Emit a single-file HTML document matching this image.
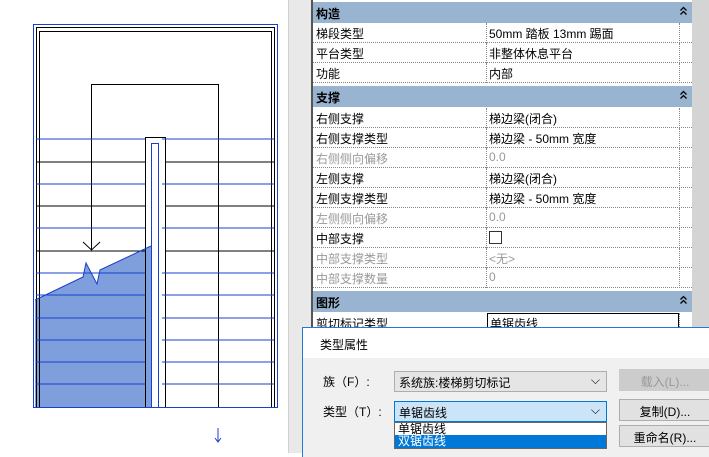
<!DOCTYPE html>
<html><head><meta charset="utf-8"><style>
*{margin:0;padding:0;box-sizing:border-box}
body{width:709px;height:453px;overflow:hidden;background:#fff;position:relative;font-family:"Liberation Sans","Noto Sans CJK SC",sans-serif;font-size:12px;color:#000}
.a{position:absolute}
.hdr{position:absolute;left:313px;width:379px;height:21px;background:#99b4d1;font-weight:bold;padding:3px 0 0 3px}
.hdr svg{position:absolute;right:5px;top:4px}
.row{position:absolute;left:313px;width:379px;height:20px;border-bottom:1px dotted #888}
.row .k{position:absolute;left:3px;top:2px}
.row .v{position:absolute;left:176px;top:2px}
.row .d1{position:absolute;left:173px;top:0;height:20px;border-left:1px dotted #888}
.row .d2{position:absolute;left:366px;top:0;height:20px;border-left:1px dotted #888}
.g{color:#999}
.btn{position:absolute;left:619px;width:92px;height:22px;border:1px solid #adadad;background:#e1e1e1;text-align:center;padding-top:3px}
</style></head><body>
<svg class="a" style="left:0;top:0" width="290" height="453">
<polygon points="35,300 83,277 86,263 97,284 100,270 151,246 151,407 35,407" fill="#7f9fdc"/>
<g fill="none" stroke="#000" stroke-width="1">
<rect x="36.5" y="27.5" width="238" height="380"/>
<rect x="39.5" y="31.5" width="232" height="376"/>
<path d="M91.5 250V84.5H218.5V407"/>
<path d="M83 242l8.5 8 8.5-8"/>
<rect x="145.5" y="137.5" width="20" height="270"/>
<path d="M36 162H145M165 162H274M36 206H145M165 206H274M36 251H145M165 251H274"/>
</g>
<g fill="none" stroke="#1a3fcf" stroke-width="1">
<rect x="33.5" y="24.5" width="244" height="383"/>
<rect x="151.5" y="143.5" width="7" height="264"/>
<path d="M36 139H145M162 139H274M36 184H145M162 184H274M36 228H145M162 228H274M36 273H145M162 273H274M36 318H145M162 318H274M36 362H145M162 362H274"/>
<path d="M35 300L83 277L86 263L97 284L100 270L151 246"/>
<path d="M218 428V442M215 438l3 4 3-4"/>
</g>
<g stroke="#1a3fcf" stroke-width="1"><path d="M36 295H145M162 295H274M36 340H145M162 340H274M36 384H145M162 384H274"/></g>
</svg>
<div class="a" style="left:288px;top:0;width:24px;height:453px;background:#e9e9e9;border-left:1px solid #d0d0d0"></div>
<div class="a" style="left:311px;top:0;width:2px;height:453px;background:#555"></div>
<div class="a" style="left:692px;top:0;width:17px;height:453px;background:#d4d4d4"></div>
<div class="a" style="left:313px;top:0;width:379px;height:2px;background:#fff"></div>

<div class="hdr" style="top:2px">构造<svg width="7" height="10"><path d="M0.5 4.5L3.5 1.5L6.5 4.5M0.5 8.5L3.5 5.5L6.5 8.5" fill="none" stroke="#000" stroke-width="1.3"/></svg></div>
<div class="row" style="top:23px"><span class="k">梯段类型</span><i class="d1"></i><span class="v">50mm 踏板 13mm 踢面</span><i class="d2"></i></div>
<div class="row" style="top:43px"><span class="k">平台类型</span><i class="d1"></i><span class="v">非整体休息平台</span><i class="d2"></i></div>
<div class="row" style="top:63px"><span class="k">功能</span><i class="d1"></i><span class="v">内部</span><i class="d2"></i></div>
<div class="hdr" style="top:86px">支撑<svg width="7" height="10"><path d="M0.5 4.5L3.5 1.5L6.5 4.5M0.5 8.5L3.5 5.5L6.5 8.5" fill="none" stroke="#000" stroke-width="1.3"/></svg></div>
<div class="row" style="top:108px"><span class="k">右侧支撑</span><i class="d1"></i><span class="v">梯边梁(闭合)</span><i class="d2"></i></div>
<div class="row" style="top:128px"><span class="k">右侧支撑类型</span><i class="d1"></i><span class="v">梯边梁 - 50mm 宽度</span><i class="d2"></i></div>
<div class="row g" style="top:148px"><span class="k">右侧侧向偏移</span><i class="d1"></i><span class="v">0.0</span><i class="d2"></i></div>
<div class="row" style="top:168px"><span class="k">左侧支撑</span><i class="d1"></i><span class="v">梯边梁(闭合)</span><i class="d2"></i></div>
<div class="row" style="top:188px"><span class="k">左侧支撑类型</span><i class="d1"></i><span class="v">梯边梁 - 50mm 宽度</span><i class="d2"></i></div>
<div class="row g" style="top:208px"><span class="k">左侧侧向偏移</span><i class="d1"></i><span class="v">0.0</span><i class="d2"></i></div>
<div class="row" style="top:228px"><span class="k">中部支撑</span><i class="d1"></i><span class="v" style="top:3px;width:13px;height:13px;border:1px solid #333"></span><i class="d2"></i></div>
<div class="row g" style="top:248px"><span class="k">中部支撑类型</span><i class="d1"></i><span class="v">&lt;无&gt;</span><i class="d2"></i></div>
<div class="row g" style="top:268px"><span class="k">中部支撑数量</span><i class="d1"></i><span class="v">0</span><i class="d2"></i></div>
<div class="hdr" style="top:291px">图形<svg width="7" height="10"><path d="M0.5 4.5L3.5 1.5L6.5 4.5M0.5 8.5L3.5 5.5L6.5 8.5" fill="none" stroke="#000" stroke-width="1.3"/></svg></div>
<div class="row" style="top:313px"><span class="k">剪切标记类型</span><span class="v" style="left:174px;top:0;width:192px;height:20px;border:1px solid #000;padding:1px 2px">单锯齿线</span><i class="d2"></i></div>

<div class="a" style="left:302px;top:327px;width:410px;height:130px;background:#f0f0f0;border-left:1px solid #1e7ad6;border-top:1px solid #1e7ad6">
<div class="a" style="left:0;top:0;width:410px;height:30px;background:#fff;padding:8px 0 0 17px;font-size:12px">类型属性</div>
<div class="a" style="left:20px;top:45px">族（F）:</div>
<div class="a" style="left:91px;top:43px;width:213px;height:21px;border:1px solid #adadad;background:#e5e5e5;padding:2px 4px">系统族:楼梯剪切标记<span style="position:absolute;right:6px;top:1px">⌵</span></div>
<div class="a" style="left:20px;top:75px">类型（T）:</div>
<div class="a" style="left:91px;top:73px;width:213px;height:21px;border:1px solid #0078d7;background:#cce4f7;padding:2px 4px">单锯齿线<span style="position:absolute;right:6px;top:1px">⌵</span></div>
<div class="a" style="left:91px;top:94px;width:213px;height:27px;background:#fff;border:1px solid #666">
<div style="height:12px;line-height:12px;padding-left:3px">单锯齿线</div>
<div style="height:13px;line-height:13px;padding-left:3px;background:#0078d7;color:#fff">双锯齿线</div></div>
</div>
<div class="btn" style="top:369px;color:#999;border-color:#ccc;background:#ccc">载入(L)...</div>
<div class="btn" style="top:399px">复制(D)...</div>
<div class="btn" style="top:425px">重命名(R)...</div>
</body></html>
